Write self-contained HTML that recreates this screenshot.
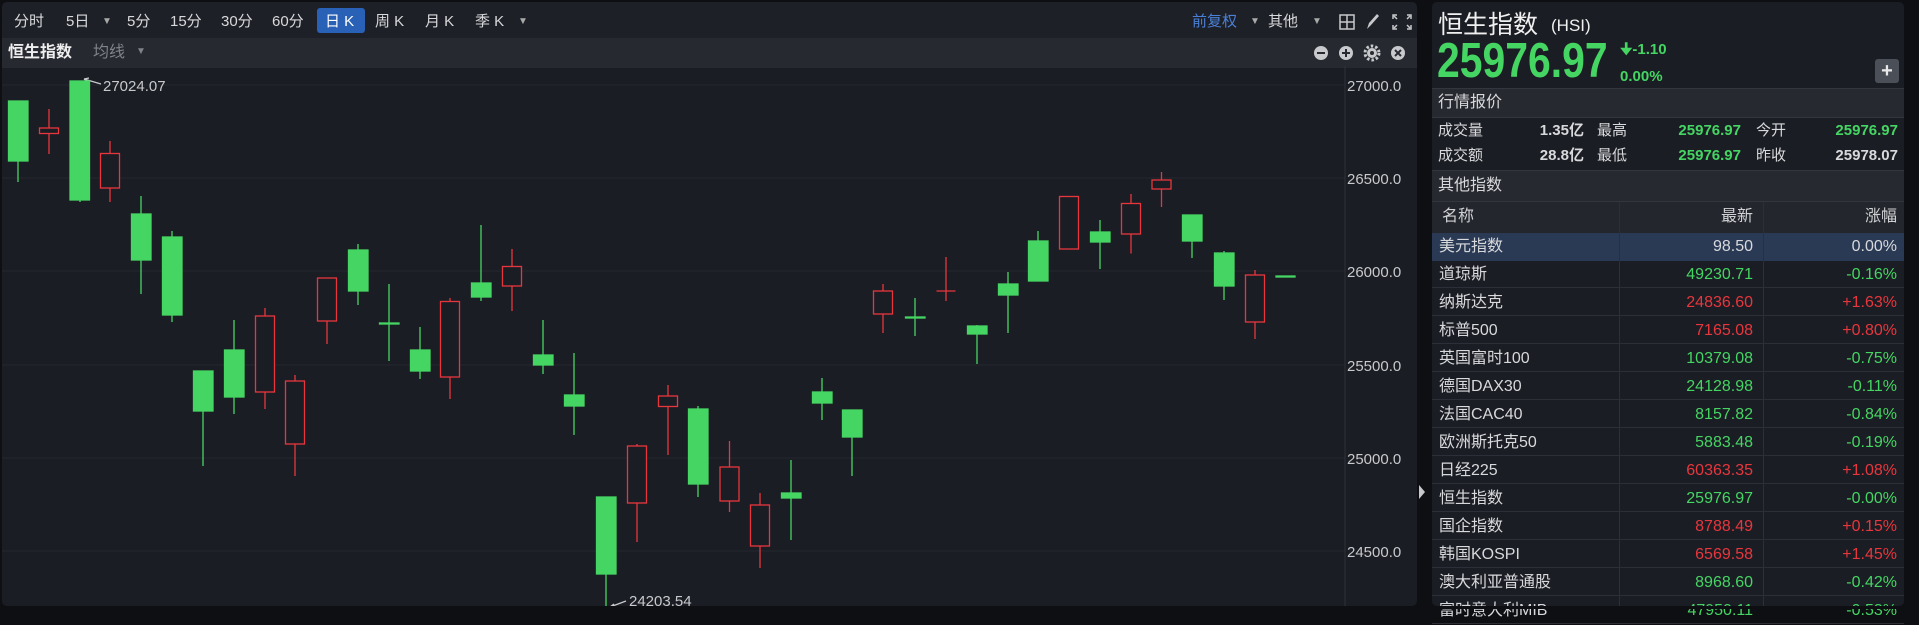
<!DOCTYPE html>
<html><head><meta charset="utf-8"><style>
*{margin:0;padding:0;box-sizing:border-box}
body{width:1919px;height:609px;background:#0e0f12;overflow:hidden;position:relative;font-family:"Liberation Sans","Noto Sans CJK SC",sans-serif;color:#d8d9dc}
.a{position:absolute;white-space:nowrap}
.g{color:#45d563}.r{color:#e8363d}
</style></head><body>
<!-- left panel -->
<div class="a" style="left:2px;top:2px;width:1415px;height:604px;background:#1b1d24;border-radius:5px;overflow:hidden">
  <div class="a" style="left:0;top:0;width:1415px;height:36px;background:#1e2027"></div>
  <div class="a" style="left:0;top:36px;width:1415px;height:30px;background:#262930"></div>
</div>
<div class="a" style="left:317px;top:8px;width:48px;height:25px;background:#2861b5;border-radius:3px"></div>
<div class="a" style="top:12px;font-size:15px;line-height:20px;color:#d8d9dc">
 <span class="a" style="left:14px">分时</span>
 <span class="a" style="left:66px">5日</span><span class="a" style="left:102px;font-size:10px;color:#aaa">▼</span>
 <span class="a" style="left:127px">5分</span>
 <span class="a" style="left:170px">15分</span>
 <span class="a" style="left:221px">30分</span>
 <span class="a" style="left:272px">60分</span>
 <span class="a" style="left:325px;color:#fff">日 K</span>
 <span class="a" style="left:375px">周 K</span>
 <span class="a" style="left:425px">月 K</span>
 <span class="a" style="left:475px">季 K</span><span class="a" style="left:518px;font-size:10px;color:#aaa">▼</span>
 <span class="a" style="left:1192px;color:#4a80d6">前复权</span><span class="a" style="left:1250px;font-size:10px;color:#aaa">▼</span>
 <span class="a" style="left:1268px">其他</span><span class="a" style="left:1312px;font-size:10px;color:#aaa">▼</span>
</div>
<div class="a" style="left:8px;top:43px;font-size:16px;font-weight:bold;color:#eee;line-height:20px">恒生指数</div>
<div class="a" style="left:93px;top:43px;font-size:16px;color:#80838a;line-height:20px">均线</div>
<div class="a" style="left:136px;top:46px;font-size:10px;color:#80838a">▼</div>
<!-- top-right icons -->
<svg class="a" style="left:1336px;top:12px" width="80" height="60" viewBox="0 0 80 60">
 <g fill="none" stroke="#c8c9cc" stroke-width="1.5"><rect x="4" y="3" width="14" height="14"/><line x1="11" y1="3" x2="11" y2="17"/><line x1="4" y1="10" x2="18" y2="10"/></g>
 <path d="M31 17 L33 11 L41 2 L43 4 L35 13 Z" fill="#c8c9cc"/>
 <g stroke="#c8c9cc" stroke-width="1.5" fill="none"><path d="M57 7V3h4M71 3h4v4M75 13v4h-4M61 17h-4v-4"/><path d="M58 4l3 3M74 4l-3 3M74 16l-3-3M58 16l3-3"/></g>
 <circle cx="-16" cy="41" r="7" fill="#c8c9cc"/><rect x="-20" y="40" width="8" height="2" fill="#262930"/>
 <circle cx="10" cy="41" r="7" fill="#c8c9cc"/><rect x="6" y="40" width="8" height="2" fill="#262930"/><rect x="9" y="37" width="2" height="8" fill="#262930"/>
 <circle cx="36" cy="41" r="5" fill="#c8c9cc"/><circle cx="36" cy="41" r="7" fill="none" stroke="#c8c9cc" stroke-width="3" stroke-dasharray="2.5 2"/><circle cx="36" cy="41" r="2" fill="#262930"/>
 <circle cx="62" cy="41" r="7" fill="#c8c9cc"/><path d="M59 38l6 6M65 38l-6 6" stroke="#262930" stroke-width="2"/>
</svg>
<svg class="a" style="left:1313px;top:46px" width="16" height="16"><circle cx="8" cy="7" r="7" fill="#c8c9cc"/><rect x="4" y="6" width="8" height="2" fill="#262930"/></svg>
<!-- chart -->
<svg class="a" style="left:0;top:0" width="1417" height="609">
 <g stroke="#252830" stroke-width="1">
  <line x1="2" y1="85" x2="1345" y2="85"/><line x1="2" y1="178" x2="1345" y2="178"/><line x1="2" y1="271" x2="1345" y2="271"/><line x1="2" y1="365" x2="1345" y2="365"/><line x1="2" y1="458" x2="1345" y2="458"/><line x1="2" y1="551" x2="1345" y2="551"/>
 </g>
 <line x1="1345" y1="66" x2="1345" y2="606" stroke="#2e3139"/>
 <g fill="#c8c9cc" font-size="15" font-family="Liberation Sans,sans-serif">
  <text x="1347" y="91">27000.0</text><text x="1347" y="184">26500.0</text><text x="1347" y="277">26000.0</text><text x="1347" y="371">25500.0</text><text x="1347" y="464">25000.0</text><text x="1347" y="557">24500.0</text>
  <text x="103" y="91">27024.07</text><text x="629" y="606">24203.54</text>
 </g>
 <path d="M84 79L101 84M84 79l5-1M84 79l4 3" stroke="#c8c9cc" stroke-width="1.3" fill="none"/>
 <path d="M610 607L626 601M610 607l5 1M610 607l4-3" stroke="#c8c9cc" stroke-width="1.3" fill="none"/>
 <g id="c"></g>
</svg>
<svg class="a" style="left:0;top:0" width="1345" height="609">
<g stroke="#45d563" fill="#45d563" stroke-width="1.3">
 <line x1="18" y1="101" x2="18" y2="182"/><rect x="8.5" y="101" width="19.5" height="60"/>
 <line x1="80" y1="81" x2="80" y2="202"/><rect x="70" y="81" width="19.5" height="119"/>
 <line x1="141" y1="196" x2="141" y2="294"/><rect x="131.5" y="214" width="19.5" height="46"/>
 <line x1="172" y1="231" x2="172" y2="322"/><rect x="162.5" y="237" width="19.5" height="78"/>
 <line x1="203" y1="371" x2="203" y2="466"/><rect x="193.5" y="371" width="19.5" height="40"/>
 <line x1="234" y1="320" x2="234" y2="414"/><rect x="224.5" y="350" width="19.5" height="47"/>
 <line x1="358" y1="244" x2="358" y2="305"/><rect x="348.5" y="250" width="19.5" height="41"/>
 <line x1="389" y1="284" x2="389" y2="361"/><rect x="379.5" y="323" width="19.5" height="1"/>
 <line x1="420" y1="327" x2="420" y2="379"/><rect x="410.5" y="350" width="19.5" height="21"/>
 <line x1="481" y1="225" x2="481" y2="301"/><rect x="471.5" y="283" width="19.5" height="14"/>
 <line x1="543" y1="320" x2="543" y2="374"/><rect x="533.5" y="355" width="19.5" height="10"/>
 <line x1="574" y1="353" x2="574" y2="435"/><rect x="564.5" y="395" width="19.5" height="11"/>
 <line x1="606" y1="497" x2="606" y2="609"/><rect x="596.5" y="497" width="19.5" height="77"/>
 <line x1="698" y1="406" x2="698" y2="497"/><rect x="688.5" y="409" width="19.5" height="75"/>
 <line x1="791" y1="460" x2="791" y2="540"/><rect x="781.5" y="493" width="19.5" height="5"/>
 <line x1="822" y1="378" x2="822" y2="420"/><rect x="812.5" y="392" width="19.5" height="11"/>
 <line x1="852" y1="410" x2="852" y2="476"/><rect x="842.5" y="410" width="19.5" height="27"/>
 <line x1="915" y1="298" x2="915" y2="336"/><rect x="905.5" y="317" width="19.5" height="1"/>
 <line x1="977" y1="325" x2="977" y2="364"/><rect x="967.5" y="326" width="19.5" height="8"/>
 <line x1="1008" y1="272" x2="1008" y2="333"/><rect x="998.5" y="284" width="19.5" height="11"/>
 <line x1="1038" y1="231" x2="1038" y2="281"/><rect x="1028.5" y="241" width="19.5" height="40"/>
 <line x1="1100" y1="220" x2="1100" y2="269"/><rect x="1090.5" y="232" width="19.5" height="10"/>
 <line x1="1192" y1="215" x2="1192" y2="258"/><rect x="1182.5" y="215" width="19.5" height="26"/>
 <line x1="1224" y1="251" x2="1224" y2="300"/><rect x="1214.5" y="253" width="19.5" height="33"/>
 <rect x="1276" y="276" width="19" height="1"/>
</g>
<g stroke="#e8363d" fill="#1b1d24" stroke-width="1.3">
 <line x1="49" y1="109" x2="49" y2="154"/><rect x="39.5" y="128" width="19" height="5.5"/>
 <line x1="110" y1="141" x2="110" y2="202"/><rect x="100.5" y="153.5" width="19" height="34.5"/>
 <line x1="265" y1="308" x2="265" y2="409"/><rect x="255.5" y="316" width="19" height="76"/>
 <line x1="295" y1="375" x2="295" y2="476"/><rect x="285.5" y="381" width="19" height="63"/>
 <line x1="327" y1="321" x2="327" y2="344"/><rect x="317.5" y="278" width="19" height="43"/>
 <line x1="450" y1="298" x2="450" y2="399"/><rect x="440.5" y="301.5" width="19" height="75.5"/>
 <line x1="512" y1="249" x2="512" y2="311"/><rect x="502.5" y="266.5" width="19" height="19.5"/>
 <line x1="637" y1="444" x2="637" y2="542"/><rect x="627.5" y="446" width="19" height="57"/>
 <line x1="668" y1="385" x2="668" y2="455"/><rect x="658.5" y="396" width="19" height="10.5"/>
 <line x1="729.5" y1="441" x2="729.5" y2="512"/><rect x="720" y="467" width="19" height="34"/>
 <line x1="760" y1="493" x2="760" y2="568"/><rect x="750.5" y="505" width="19" height="41"/>
 <line x1="883" y1="284" x2="883" y2="333"/><rect x="873.5" y="291" width="19" height="23"/>
 <line x1="946" y1="257" x2="946" y2="301"/><line x1="936.5" y1="291" x2="955.5" y2="291"/>
 <rect x="1059.5" y="196.5" width="19" height="52.5"/>
 <line x1="1131" y1="194" x2="1131" y2="253.5"/><rect x="1121.5" y="203.5" width="19" height="30.5"/>
 <line x1="1161.5" y1="172" x2="1161.5" y2="207"/><rect x="1152" y="180" width="19" height="9"/>
 <line x1="1255" y1="270" x2="1255" y2="339"/><rect x="1245.5" y="275" width="19" height="47"/>
</g>
</svg>
<!-- side arrow -->
<div class="a" style="left:1419px;top:485px;width:0;height:0;border-top:7px solid transparent;border-bottom:7px solid transparent;border-left:6px solid #c8c9cc"></div>
<!-- right panel -->
<div class="a" style="left:1432px;top:2px;width:472px;height:604px;background:#1b1d24;border-radius:5px;overflow:hidden">
 <div class="a" style="left:0;top:86px;width:472px;height:30px;background:#262930;border-top:1px solid #33363e;border-bottom:1px solid #33363e"></div>
 <div class="a" style="left:0;top:168px;width:472px;height:32px;background:#262930;border-top:1px solid #33363e;border-bottom:1px solid #33363e"></div>
 <div class="a" style="left:0;top:200px;width:472px;height:31px;background:#23262d"></div>
 <div class="a" style="left:0;top:231px;width:472px;height:28px;background:#2a3a55"></div>
</div>
<div class="a" style="left:1438px;top:9px;font-size:25px;line-height:32px;color:#f0f0f0">恒生指数</div>
<div class="a" style="left:1551px;top:15px;font-size:17px;line-height:22px;color:#f0f0f0">(HSI)</div>
<div class="a g" style="left:1437px;top:33px;font-size:49px;line-height:56px;font-weight:bold;transform:scaleX(0.835);transform-origin:left">25976.97</div>
<div class="a g" style="left:1620px;top:41px;font-size:15px;font-weight:bold;line-height:18px">🠋-1.10</div>
<div class="a g" style="left:1620px;top:67px;font-size:15px;font-weight:bold;line-height:20px">0.00%</div>
<div class="a" style="left:1875px;top:59px;width:24px;height:24px;background:#4b4f58;border-radius:3px;color:#e8e8e8;font-size:20px;font-weight:bold;text-align:center;line-height:24px">+</div>
<div class="a" style="left:1438px;top:93px;font-size:16px;line-height:20px">行情报价</div>
<div class="a" style="left:1438px;top:176px;font-size:16px;line-height:20px">其他指数</div>
<div style="position:absolute;left:0;top:121px;font-size:15px;line-height:20px">
 <span class="a" style="left:1438px">成交量</span><span class="a" style="left:1534px;width:50px;text-align:right;font-weight:bold">1.35亿</span>
 <span class="a" style="left:1597px">最高</span><span class="a g" style="left:1640px;width:101px;text-align:right;font-weight:bold">25976.97</span>
 <span class="a" style="left:1756px">今开</span><span class="a g" style="left:1797px;width:101px;text-align:right;font-weight:bold">25976.97</span>
</div>
<div style="position:absolute;left:0;top:146px;font-size:15px;line-height:20px">
 <span class="a" style="left:1438px">成交额</span><span class="a" style="left:1534px;width:50px;text-align:right;font-weight:bold">28.8亿</span>
 <span class="a" style="left:1597px">最低</span><span class="a g" style="left:1640px;width:101px;text-align:right;font-weight:bold">25976.97</span>
 <span class="a" style="left:1756px">昨收</span><span class="a" style="left:1797px;width:101px;text-align:right;font-weight:bold">25978.07</span>
</div>
<div class="a" style="left:1619px;top:202px;width:1px;height:404px;background:#2c2f37"></div>
<div class="a" style="left:1763px;top:202px;width:1px;height:404px;background:#2c2f37"></div>
<div style="position:absolute;left:0;top:207px;font-size:16px;line-height:20px;color:#d0d1d4">
 <span class="a" style="left:1442px">名称</span><span class="a" style="left:1653px;width:100px;text-align:right">最新</span><span class="a" style="left:1797px;width:100px;text-align:right">涨幅</span>
</div>
<div style="position:absolute;left:0;top:233px;font-size:16px;line-height:28px">
<div style="position:absolute;top:0"><span class="a" style="left:1439px">美元指数</span><span class="a" style="left:1633px;width:120px;text-align:right">98.50</span><span class="a" style="left:1777px;width:120px;text-align:right">0.00%</span></div>
<div style="position:absolute;top:28px"><span class="a" style="left:1439px">道琼斯</span><span class="a g" style="left:1633px;width:120px;text-align:right">49230.71</span><span class="a g" style="left:1777px;width:120px;text-align:right">-0.16%</span></div>
<div style="position:absolute;top:56px"><span class="a" style="left:1439px">纳斯达克</span><span class="a r" style="left:1633px;width:120px;text-align:right">24836.60</span><span class="a r" style="left:1777px;width:120px;text-align:right">+1.63%</span></div>
<div style="position:absolute;top:84px"><span class="a" style="left:1439px">标普500</span><span class="a r" style="left:1633px;width:120px;text-align:right">7165.08</span><span class="a r" style="left:1777px;width:120px;text-align:right">+0.80%</span></div>
<div style="position:absolute;top:112px"><span class="a" style="left:1439px">英国富时100</span><span class="a g" style="left:1633px;width:120px;text-align:right">10379.08</span><span class="a g" style="left:1777px;width:120px;text-align:right">-0.75%</span></div>
<div style="position:absolute;top:140px"><span class="a" style="left:1439px">德国DAX30</span><span class="a g" style="left:1633px;width:120px;text-align:right">24128.98</span><span class="a g" style="left:1777px;width:120px;text-align:right">-0.11%</span></div>
<div style="position:absolute;top:168px"><span class="a" style="left:1439px">法国CAC40</span><span class="a g" style="left:1633px;width:120px;text-align:right">8157.82</span><span class="a g" style="left:1777px;width:120px;text-align:right">-0.84%</span></div>
<div style="position:absolute;top:196px"><span class="a" style="left:1439px">欧洲斯托克50</span><span class="a g" style="left:1633px;width:120px;text-align:right">5883.48</span><span class="a g" style="left:1777px;width:120px;text-align:right">-0.19%</span></div>
<div style="position:absolute;top:224px"><span class="a" style="left:1439px">日经225</span><span class="a r" style="left:1633px;width:120px;text-align:right">60363.35</span><span class="a r" style="left:1777px;width:120px;text-align:right">+1.08%</span></div>
<div style="position:absolute;top:252px"><span class="a" style="left:1439px">恒生指数</span><span class="a g" style="left:1633px;width:120px;text-align:right">25976.97</span><span class="a g" style="left:1777px;width:120px;text-align:right">-0.00%</span></div>
<div style="position:absolute;top:280px"><span class="a" style="left:1439px">国企指数</span><span class="a r" style="left:1633px;width:120px;text-align:right">8788.49</span><span class="a r" style="left:1777px;width:120px;text-align:right">+0.15%</span></div>
<div style="position:absolute;top:308px"><span class="a" style="left:1439px">韩国KOSPI</span><span class="a r" style="left:1633px;width:120px;text-align:right">6569.58</span><span class="a r" style="left:1777px;width:120px;text-align:right">+1.45%</span></div>
<div style="position:absolute;top:336px"><span class="a" style="left:1439px">澳大利亚普通股</span><span class="a g" style="left:1633px;width:120px;text-align:right">8968.60</span><span class="a g" style="left:1777px;width:120px;text-align:right">-0.42%</span></div>
<div style="position:absolute;top:364px"><span class="a" style="left:1439px">富时意大利MIB</span><span class="a g" style="left:1633px;width:120px;text-align:right">47950.11</span><span class="a g" style="left:1777px;width:120px;text-align:right">-0.53%</span></div>
</div>
<div style="position:absolute;left:1432px;top:260px;width:472px">
 <div style="height:28px;border-bottom:1px solid #2c2f37"></div><div style="height:28px;border-bottom:1px solid #2c2f37"></div><div style="height:28px;border-bottom:1px solid #2c2f37"></div><div style="height:28px;border-bottom:1px solid #2c2f37"></div><div style="height:28px;border-bottom:1px solid #2c2f37"></div><div style="height:28px;border-bottom:1px solid #2c2f37"></div><div style="height:28px;border-bottom:1px solid #2c2f37"></div><div style="height:28px;border-bottom:1px solid #2c2f37"></div><div style="height:28px;border-bottom:1px solid #2c2f37"></div><div style="height:28px;border-bottom:1px solid #2c2f37"></div><div style="height:28px;border-bottom:1px solid #2c2f37"></div><div style="height:28px;border-bottom:1px solid #2c2f37"></div><div style="height:28px;border-bottom:1px solid #2c2f37"></div>
</div>
<div class="a" style="left:0;top:606px;width:1919px;height:3px;background:#0e0f12"></div>
</body></html>
